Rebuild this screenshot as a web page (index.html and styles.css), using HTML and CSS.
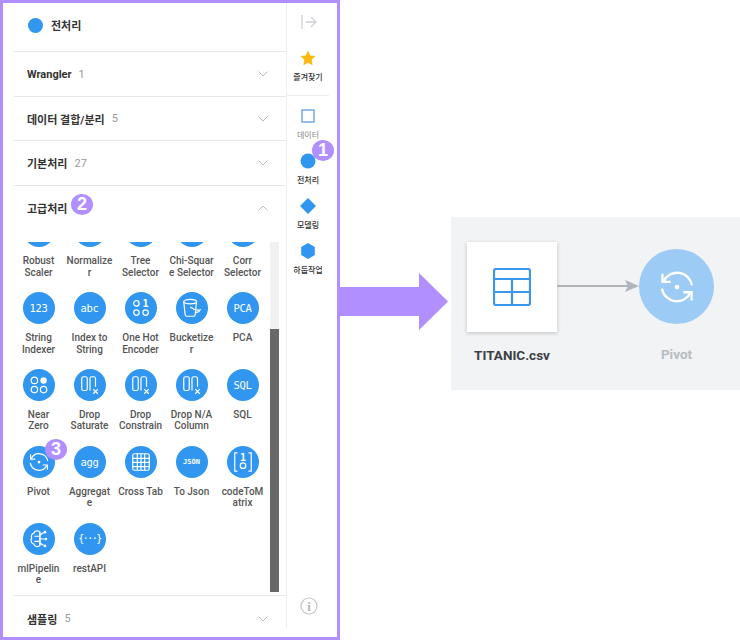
FILE: index.html
```html
<!DOCTYPE html>
<html lang="ko">
<head>
    <meta charset="UTF-8">
    <meta name="viewport" content="width=device-width, initial-scale=1.0">
    <title>전처리 Pivot</title>
    <link rel="stylesheet" href="styles.css">
</head>
<body>
    <svg class="defs" width="0" height="0">
        <symbol id="i-pivot" viewBox="0 0 24 24">
            <path d="M21.500 11A9.500 9.500 0 0 0 3.500 8.500"/>
            <path d="M2.800 3.600v5.200h5.200"/>
            <path d="M2.500 13A9.500 9.500 0 0 0 20.500 15.500"/>
            <path d="M21.200 20.500v-5.200H16"/>
            <circle class="solid" cx="12" cy="12" r="1.500"/>
        </symbol>
        <symbol id="i-drop" viewBox="0 0 24 24">
            <rect x="3" y="3" width="6" height="15" rx="2"/>
            <path d="M12 18V5a2 2 0 0 1 2-2h2a2 2 0 0 1 2 2v9"/>
            <path d="M15.500 16.500l5 5M20.500 16.500l-5 5"/>
        </symbol>
    </svg>

    <div class="page">
        <div class="panel">
            <div class="panel-inner">
                <div class="steps">
                    <div class="steps-head">
                        <span class="dot"></span>
                        <span class="steps-title">전처리</span>
                    </div>
                    <div class="group"><span class="group-name">Wrangler</span><span class="group-count">1</span><svg class="chevron" viewBox="0 0 10 6"><path d="M.5 .5L5 5l4.500-4.500"/></svg></div>
                    <div class="group"><span class="group-name">데이터 결합/분리</span><span class="group-count">5</span><svg class="chevron" viewBox="0 0 10 6"><path d="M.5 .5L5 5l4.500-4.500"/></svg></div>
                    <div class="group"><span class="group-name">기본처리</span><span class="group-count">27</span><svg class="chevron" viewBox="0 0 10 6"><path d="M.5 .5L5 5l4.500-4.500"/></svg></div>
                    <div class="group group-open"><span class="group-name">고급처리</span><svg class="chevron" viewBox="0 0 10 6"><path d="M.5 5.500L5 1l4.500 4.500"/></svg></div>

                    <div class="ops">
                        <div class="ops-clip">
                            <div class="op-grid">
                                <div class="op"><span class="op-icon"></span><span class="op-label">Robust<br>Scaler</span></div>
                                <div class="op"><span class="op-icon"></span><span class="op-label">Normalize<br>r</span></div>
                                <div class="op"><span class="op-icon"></span><span class="op-label">Tree<br>Selector</span></div>
                                <div class="op"><span class="op-icon"></span><span class="op-label">Chi-Squar<br>e Selector</span></div>
                                <div class="op"><span class="op-icon"></span><span class="op-label">Corr<br>Selector</span></div>

                                <div class="op"><span class="op-icon"><span class="glyph">123</span></span><span class="op-label">String<br>Indexer</span></div>
                                <div class="op"><span class="op-icon"><span class="glyph">abc</span></span><span class="op-label">Index to<br>String</span></div>
                                <div class="op"><span class="op-icon">
                                    <svg viewBox="0 0 24 24"><circle cx="7" cy="7" r="3"/><text x="17" y="10.500" class="svg-num">1</text><circle cx="7" cy="17" r="3"/><circle cx="17" cy="17" r="3"/></svg>
                                </span><span class="op-label">One Hot<br>Encoder</span></div>
                                <div class="op"><span class="op-icon">
                                    <svg viewBox="0 0 24 24"><ellipse cx="10" cy="5" rx="7" ry="2.500"/><path d="M3 5l1.500 14a2 2 0 0 0 2 2h7a2 2 0 0 0 2-2L17 5"/><path d="M10 11c4 3 8 4 11 3-1 2-3 3-5 3"/></svg>
                                </span><span class="op-label">Bucketize<br>r</span></div>
                                <div class="op"><span class="op-icon"><span class="glyph">PCA</span></span><span class="op-label">PCA</span></div>

                                <div class="op"><span class="op-icon">
                                    <svg viewBox="0 0 24 24"><circle cx="7" cy="7" r="3.500"/><circle class="solid" cx="17" cy="7" r="3.500"/><circle cx="7" cy="17" r="3.500"/><circle cx="17" cy="17" r="3.500"/></svg>
                                </span><span class="op-label">Near<br>Zero</span></div>
                                <div class="op"><span class="op-icon"><svg viewBox="0 0 24 24"><use href="#i-drop"/></svg></span><span class="op-label">Drop<br>Saturate</span></div>
                                <div class="op"><span class="op-icon"><svg viewBox="0 0 24 24"><use href="#i-drop"/></svg></span><span class="op-label">Drop<br>Constrain</span></div>
                                <div class="op"><span class="op-icon"><svg viewBox="0 0 24 24"><use href="#i-drop"/></svg></span><span class="op-label">Drop N/A<br>Column</span></div>
                                <div class="op"><span class="op-icon"><span class="glyph">SQL</span></span><span class="op-label">SQL</span></div>

                                <div class="op"><span class="op-icon"><svg viewBox="0 0 24 24"><use href="#i-pivot"/></svg></span><span class="op-label">Pivot</span></div>
                                <div class="op"><span class="op-icon"><span class="glyph">agg</span></span><span class="op-label">Aggregat<br>e</span></div>
                                <div class="op"><span class="op-icon">
                                    <svg viewBox="0 0 24 24"><rect x="3" y="3" width="18" height="18" rx="2"/><path d="M3 8h18M3 12.500h18M3 17h18M8 3v18M12 3v18M16 3v18"/></svg>
                                </span><span class="op-label">Cross Tab</span></div>
                                <div class="op"><span class="op-icon"><span class="glyph glyph-small">JSON</span></span><span class="op-label">To Json</span></div>
                                <div class="op"><span class="op-icon">
                                    <svg viewBox="0 0 24 24"><path d="M6 2H3v20h3M18 2h3v20h-3"/><text x="12" y="11" class="svg-num">1</text><circle cx="12" cy="16" r="3"/></svg>
                                </span><span class="op-label">codeToM<br>atrix</span></div>

                                <div class="op"><span class="op-icon">
                                    <svg viewBox="0 0 24 24"><path d="M13 4.500C11 2 7 3 6.500 5.500 4 6 3 9 4 11c-1.500 2-.5 6 2.500 6.500C7 20 11 21.500 13 19z"/><path d="M13 4.500V19M7 9h6M7 14.500h6M13 12h5M13 8l4-3M13 16l4 3"/><circle class="solid" cx="19.500" cy="12" r="1.500"/><circle class="solid" cx="18.500" cy="4.500" r="1.500"/><circle class="solid" cx="18.500" cy="19.500" r="1.500"/></svg>
                                </span><span class="op-label">mlPipelin<br>e</span></div>
                                <div class="op"><span class="op-icon"><span class="glyph glyph-api">{···}</span></span><span class="op-label">restAPI</span></div>
                            </div>
                        </div>
                        <div class="scrollbar">
                            <div class="scroll-track"></div>
                            <div class="scroll-thumb"></div>
                        </div>
                    </div>

                    <div class="group group-last"><span class="group-name">샘플링</span><span class="group-count">5</span><svg class="chevron" viewBox="0 0 10 6"><path d="M.5 .5L5 5l4.500-4.500"/></svg></div>
                </div>

                <div class="rail">
                    <svg class="rail-expand" viewBox="0 0 16 16"><path d="M1 1v14M5 8h10M10 3l5 5-5 5"/></svg>
                    <div class="tool tool-fav">
                        <svg class="tool-icon" viewBox="0 0 16 16"><path class="star" d="M8 .5l2.300 4.900 5.200.700-3.800 3.700.9 5.400L8 12.700l-4.600 2.500.9-5.400L.5 6.100l5.200-.7z"/></svg>
                        <span class="tool-label tool-label-on">즐겨찾기</span>
                    </div>
                    <div class="tool">
                        <svg class="tool-icon" viewBox="0 0 16 16"><rect class="square" x="2" y="2" width="12" height="12"/></svg>
                        <span class="tool-label">데이터</span>
                    </div>
                    <div class="tool">
                        <svg class="tool-icon" viewBox="0 0 16 16"><circle class="shape" cx="8" cy="8" r="7.500"/></svg>
                        <span class="tool-label tool-label-on">전처리</span>
                    </div>
                    <div class="tool">
                        <svg class="tool-icon" viewBox="0 0 16 16"><path class="shape" d="M8 0l8 8-8 8-8-8z"/></svg>
                        <span class="tool-label tool-label-on">모델링</span>
                    </div>
                    <div class="tool">
                        <svg class="tool-icon" viewBox="0 0 16 16"><path class="shape" d="M8 0l6.800 4v8L8 16l-6.800-4V4z"/></svg>
                        <span class="tool-label tool-label-on">하둡작업</span>
                    </div>
                    <svg class="rail-info" viewBox="0 0 18 18"><circle cx="9" cy="9" r="8"/><text x="9" y="13.500">i</text></svg>
                </div>
            </div>
        </div>

        <svg class="big-arrow" viewBox="0 0 108 57"><path d="M0 14h79V0l29 28.500L79 57V43H0z"/></svg>

        <div class="flow">
            <div class="node">
                <div class="node-box">
                    <svg viewBox="0 0 38 38"><rect x="1" y="1" width="36" height="36" rx="2"/><path d="M1 11h36M1 24h36M19 11v26"/></svg>
                </div>
                <span class="node-name">TITANIC.csv</span>
            </div>
            <svg class="link" viewBox="0 0 82 14"><path d="M0 7h72"/><path class="link-head" d="M68 1l14 6-14 6 3-6z"/></svg>
            <div class="node node-pale">
                <div class="node-circle">
                    <svg viewBox="0 0 24 24"><use href="#i-pivot"/></svg>
                </div>
                <span class="node-name">Pivot</span>
            </div>
        </div>

        <span class="badge badge-1">1</span>
        <span class="badge badge-2">2</span>
        <span class="badge badge-3">3</span>
    </div>
</body>
</html>
```

FILE: styles.css
```css
* {
    box-sizing: border-box;
}
body {
    margin: 0;
    background-color: #fff;
    font-family: Roboto, "Noto Sans CJK KR", sans-serif;
    color: #333;
}
.defs {
    position: absolute;
}
.page {
    position: relative;
    display: flex;
    align-items: flex-start;
    width: 740px;
    height: 640px;
    overflow: hidden;
}

/* left panel */
.panel {
    flex: none;
    width: 340px;
    height: 640px;
    border: 3px solid #b18fff;
}
.panel-inner {
    display: flex;
    height: 625px;
    overflow: hidden;
}
.steps {
    flex: none;
    width: 283px;
    padding-left: 11px;
}
.steps-head {
    display: flex;
    align-items: center;
    gap: 8px;
    height: 49px;
    padding: 0 0 4px 14px;
    border-bottom: 1px solid #e8e8e8;
}
.dot {
    width: 15px;
    height: 15px;
    border-radius: 50%;
    background-color: #3096ef;
}
.steps-title {
    font-size: 11px;
    font-weight: 700;
}
.group {
    display: flex;
    align-items: center;
    gap: 7px;
    height: 44.600px;
    padding: 1px 18px 0 13px;
    border-bottom: 1px solid #e8e8e8;
}
.group-open {
    padding-top: 0;
    border-bottom: 0;
}
.group-last {
    border-bottom: 0;
    border-top: 1px solid #e8e8e8;
    margin-top: 3px;
}
.group-name {
    font-size: 11px;
    font-weight: 700;
}
.group-count {
    font-size: 11px;
    color: #999;
}
.chevron {
    width: 10px;
    height: 6px;
    margin-left: auto;
    fill: none;
    stroke: #bbb;
}

/* operators */
.ops {
    display: flex;
    height: 350px;
    margin-top: 12px;
    padding-right: 7px;
}
.ops-clip {
    flex: 1;
    overflow: hidden;
}
.op-grid {
    display: grid;
    grid-template-columns: repeat(5, 51px);
    grid-auto-rows: 76.800px;
    margin: -27px 0 0 -1px;
}
.op {
    display: flex;
    flex-direction: column;
    align-items: center;
}
.op-icon {
    display: flex;
    flex: none;
    align-items: center;
    justify-content: center;
    width: 32px;
    height: 32px;
    border-radius: 50%;
    background-color: #3096ef;
}
.op-icon svg {
    width: 22px;
    height: 22px;
    fill: none;
    stroke: #fff;
    stroke-width: 1.300;
}
.op-label {
    margin-top: 8px;
    font-size: 10px;
    font-weight: 500;
    line-height: 11.500px;
    color: #555;
    text-align: center;
    white-space: nowrap;
}
.glyph {
    font-family: "DejaVu Sans Mono", monospace;
    font-size: 10.500px;
    letter-spacing: -.3px;
    color: #fff;
}
.glyph-small {
    font-size: 7px;
    font-weight: 700;
    letter-spacing: 0;
}
.glyph-api {
    font-size: 10px;
    letter-spacing: -1.500px;
}
.solid {
    fill: #fff;
    stroke: none;
}
.svg-num {
    fill: #fff;
    stroke: none;
    font-family: "DejaVu Sans Mono", monospace;
    font-size: 11px;
    font-weight: 700;
    text-anchor: middle;
}
.scrollbar {
    display: flex;
    flex-direction: column;
    flex: none;
    width: 9px;
}
.scroll-track {
    height: 87px;
    background-color: #f1f1f1;
}
.scroll-thumb {
    flex: 1;
    background-color: #686868;
}

/* right rail */
.rail {
    display: flex;
    flex: 1;
    flex-direction: column;
    border-left: 1px solid #eee;
}
.rail-expand {
    flex: none;
    width: 16px;
    height: 16px;
    margin: 11px 0 20px 14px;
    fill: none;
    stroke: #ccd1d7;
    stroke-width: 1.300;
}
.tool {
    display: flex;
    flex-direction: column;
    align-items: center;
    flex: none;
    height: 45px;
    margin-right: 8px;
}
.tool-fav {
    height: 46px;
    margin-bottom: 12px;
    border-bottom: 1px solid #eee;
}
.tool-icon {
    flex: none;
    width: 16px;
    height: 16px;
}
.tool-label {
    margin-top: 6px;
    font-size: 8px;
    line-height: 12px;
    color: #888;
    white-space: nowrap;
}
.tool-label-on {
    font-weight: 500;
    color: #333;
}
.star {
    fill: #fdb913;
}
.square {
    fill: #fff;
    stroke: #75a8e8;
    stroke-width: 1.500;
}
.shape {
    fill: #3096ef;
}
.rail-info {
    flex: none;
    width: 18px;
    height: 18px;
    margin: auto 0 13px 13px;
    fill: none;
    stroke: #c4c4c4;
    stroke-width: 1.200;
}
.rail-info text {
    fill: #b5b5b5;
    stroke: none;
    font-family: "Liberation Serif", serif;
    font-size: 13px;
    font-weight: 700;
    text-anchor: middle;
}

/* big arrow and flow */
.big-arrow {
    flex: none;
    width: 108px;
    height: 57px;
    margin-top: 273px;
    fill: #b18fff;
}
.flow {
    display: flex;
    flex: none;
    align-items: flex-start;
    width: 289px;
    height: 173px;
    margin: 217px 0 0 3px;
    padding: 25px 0 0 16px;
    background-color: #f1f3f5;
}
.node {
    display: flex;
    flex: none;
    flex-direction: column;
    align-items: center;
}
.node-box {
    display: flex;
    align-items: center;
    justify-content: center;
    width: 90px;
    height: 90px;
    background-color: #fff;
    box-shadow: 0 1px 4px rgba(0, 0, 0, .22);
}
.node-box svg {
    width: 38px;
    height: 38px;
    fill: none;
    stroke: #3a97ea;
    stroke-width: 2.200;
}
.node-name {
    margin-top: 15px;
    font-size: 13.500px;
    font-weight: 700;
    line-height: 16px;
    color: #3c4043;
}
.link {
    flex: none;
    width: 82px;
    height: 14px;
    margin-top: 37px;
    fill: none;
    stroke: #b0b5ba;
    stroke-width: 2;
}
.link-head {
    fill: #b0b5ba;
    stroke: none;
}
.node-pale {
    margin-top: 7px;
}
.node-pale .node-name {
    margin-top: 22px;
    color: #b9bcc0;
}
.node-circle {
    display: flex;
    align-items: center;
    justify-content: center;
    width: 75px;
    height: 75px;
    border-radius: 50%;
    background-color: #9ccbf5;
}
.node-circle svg {
    width: 38px;
    height: 38px;
    fill: none;
    stroke: #fff;
    stroke-width: 1.500;
}

/* numbered badges laid over the screenshot */
.badge {
    position: absolute;
    display: flex;
    align-items: center;
    justify-content: center;
    width: 22px;
    height: 21px;
    border-radius: 50%;
    background-color: #b18fff;
    font-family: "Liberation Sans", sans-serif;
    font-size: 18px;
    font-weight: 700;
    color: #fff;
}
.badge-1 {
    left: 312px;
    top: 140px;
}
.badge-2 {
    left: 71px;
    top: 194px;
}
.badge-3 {
    left: 45px;
    top: 439px;
}
```
